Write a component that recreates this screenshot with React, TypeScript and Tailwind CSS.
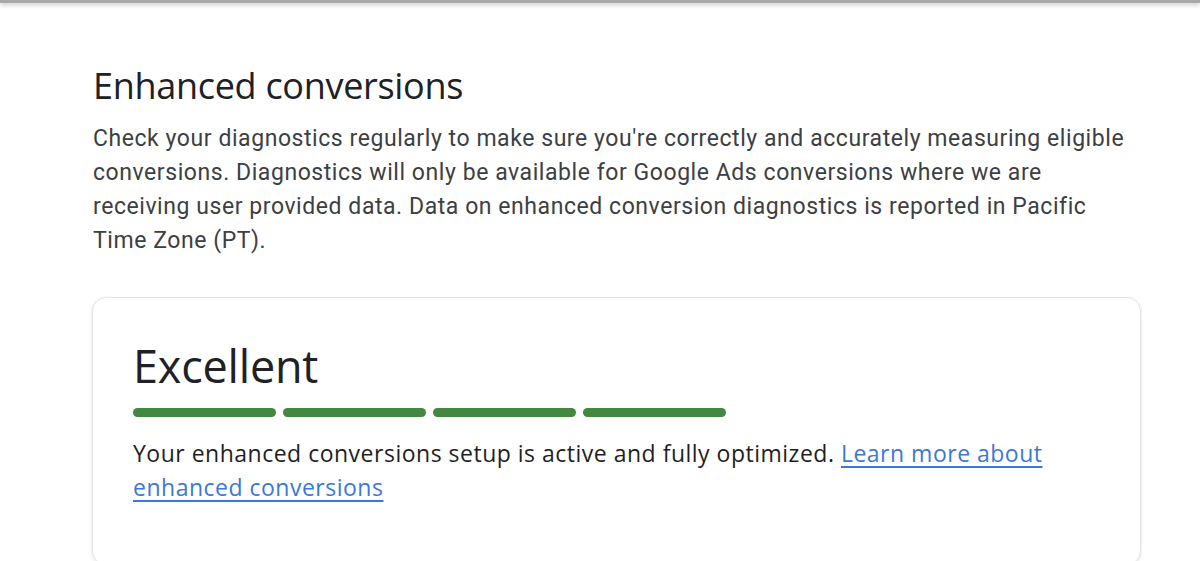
import React from "react";

export default function App() {
  return (
    <div className="w-[1200px] h-[561px] overflow-hidden bg-white relative" style={{ fontFamily: "Roboto, 'Liberation Sans', sans-serif" }}>
      <div className="h-[3px] bg-[#a8a8a8] shadow-[0_2px_4px_rgba(0,0,0,0.25)]" />
      <div className="pl-[93px] pr-[59px] pt-[61px]">
        <h1 className="text-[36px] leading-[44px] text-[#202124] tracking-[-0.3px]" style={{ fontFamily: "'Open Sans', Roboto, sans-serif" }}>
          Enhanced conversions
        </h1>
        <p className="mt-[14px] text-[23px] leading-[34px] text-[#3c4043] tracking-[0.56px]">
          Check your diagnostics regularly to make sure you're correctly and accurately measuring eligible conversions. Diagnostics will only be available for Google Ads conversions where we are receiving user provided data. Data on enhanced conversion diagnostics is reported in Pacific Time Zone (PT).
        </p>
        <div className="mt-[39px] -ml-px rounded-[14px] border border-[#e3e3e3] shadow-[0_1px_3px_rgba(0,0,0,0.12)] pl-[40px] pr-[40px] pt-[40px] pb-[60px]">
          <div className="text-[45px] leading-[56px] text-[#202124] tracking-[-0.2px]" style={{ fontFamily: "'Open Sans', Roboto, sans-serif" }}>
            Excellent
          </div>
          <div className="mt-[14px] flex gap-[7px]">
            {[0, 1, 2, 3].map((i) => (
              <div key={i} className="w-[143px] h-[9px] rounded-full bg-[#43883f]" />
            ))}
          </div>
          <p className="mt-[19px] text-[23px] leading-[34px] text-[#1f1f1f] tracking-[0.5px]" style={{ fontFamily: "'Open Sans', Roboto, sans-serif" }}>
            Your enhanced conversions setup is active and fully optimized.{" "}
            <a href="#" className="text-[#3b78d8] underline underline-offset-[4px]">
              Learn more about enhanced conversions
            </a>
          </p>
        </div>
      </div>
    </div>
  );
}
